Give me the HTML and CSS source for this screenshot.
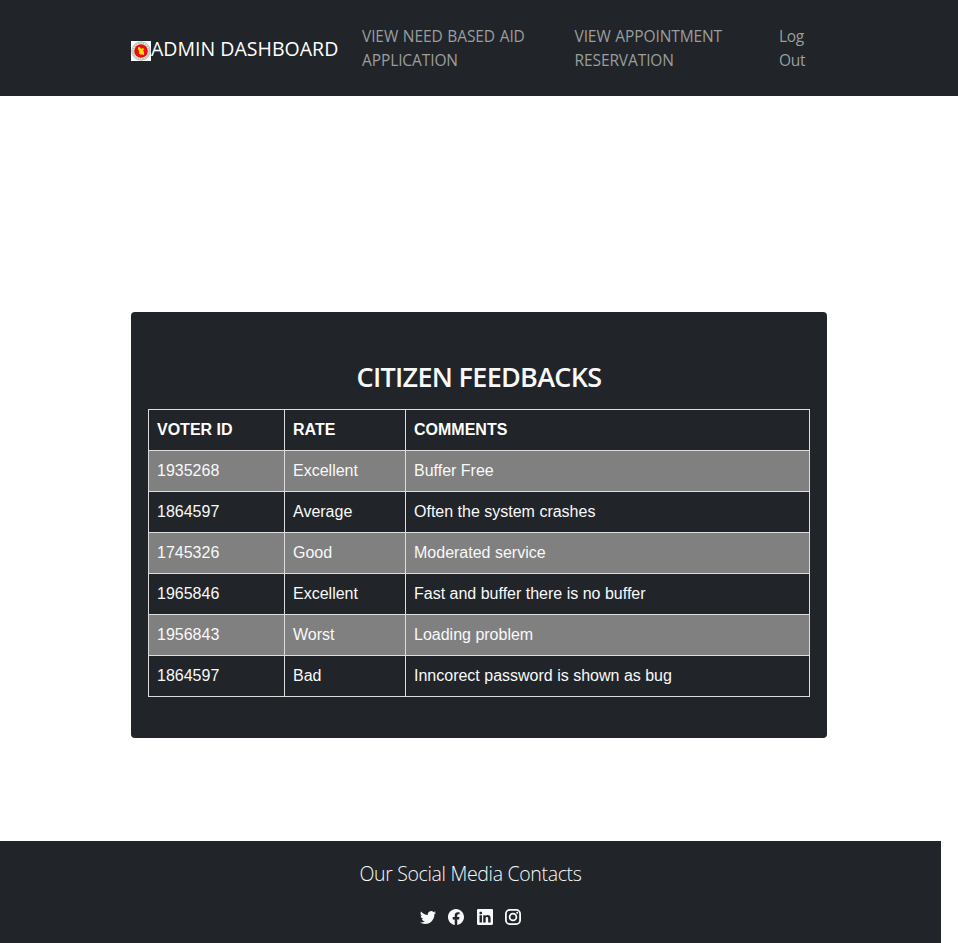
FILE: index.html
```html
<!DOCTYPE html>
<html lang="en">
<head>
<meta charset="utf-8">
<title>Admin Dashboard</title>
<link rel="stylesheet" href="styles.css">
</head>
<body>
<nav class="navbar">
  <a class="brand" href="#">
    <svg class="seal" viewBox="0 0 20 20" aria-hidden="true">
      <rect width="20" height="20" fill="#fff"/>
      <circle cx="10" cy="10" r="9.2" fill="#dcebe0" stroke="#9cc7ab" stroke-width="1"/>
      <circle cx="10" cy="10" r="7.8" fill="none" stroke="#b5a79e" stroke-width="1" stroke-dasharray="1.2 1.2"/>
      <circle cx="10" cy="10" r="6.8" fill="#ed0c10"/>
      <path d="M7 6h2l1 2 2-1 1 1-1 2 1 1v3h-1l-1-1-1 1-1-1H8v-3L7 8z" fill="#ffe000"/>
    </svg><span class="brand-name">ADMIN DASHBOARD</span>
  </a>
  <ul class="links">
    <li class="aid"><a href="#">VIEW NEED BASED AID<br>APPLICATION</a></li>
    <li class="appointment"><a href="#">VIEW APPOINTMENT<br>RESERVATION</a></li>
    <li class="logout"><a href="#">Log<br>Out</a></li>
  </ul>
</nav>
<main class="card">
  <h1 class="title"><span>CITIZEN FEEDBACKS</span></h1>
  <table class="feedback">
    <colgroup><col class="col-id"><col class="col-rate"><col></colgroup>
    <tr><th>VOTER ID</th><th>RATE</th><th>COMMENTS</th></tr>
    <tr><td>1935268</td><td>Excellent</td><td>Buffer Free</td></tr>
    <tr><td>1864597</td><td>Average</td><td>Often the system crashes</td></tr>
    <tr><td>1745326</td><td>Good</td><td>Moderated service</td></tr>
    <tr><td>1965846</td><td>Excellent</td><td>Fast and buffer there is no buffer</td></tr>
    <tr><td>1956843</td><td>Worst</td><td>Loading problem</td></tr>
    <tr><td>1864597</td><td>Bad</td><td>Inncorect password is shown as bug</td></tr>
  </table>
</main>
<footer class="footer">
  <p class="contacts"><span>Our Social Media Contacts</span></p>
  <div class="social">
    <svg viewBox="0 0 16 16"><path d="M5.026 15c6.038 0 9.341-5.003 9.341-9.334 0-.14 0-.282-.006-.422A6.685 6.685 0 0 0 16 3.542a6.658 6.658 0 0 1-1.889.518 3.301 3.301 0 0 0 1.447-1.817 6.533 6.533 0 0 1-2.087.793A3.286 3.286 0 0 0 7.875 6.03a9.325 9.325 0 0 1-6.767-3.429 3.289 3.289 0 0 0 1.018 4.382A3.323 3.323 0 0 1 .64 6.575v.045a3.288 3.288 0 0 0 2.632 3.218 3.203 3.203 0 0 1-.865.115 3.23 3.23 0 0 1-.614-.057 3.283 3.283 0 0 0 3.067 2.277A6.588 6.588 0 0 1 .78 13.58a6.32 6.32 0 0 1-.78-.045A9.344 9.344 0 0 0 5.026 15z"/></svg>
    <svg viewBox="0 0 16 16"><path d="M16 8.049c0-4.446-3.582-8.05-8-8.05C3.58 0-.002 3.603-.002 8.05c0 4.017 2.926 7.347 6.75 7.951v-5.625h-2.03V8.05H6.75V6.275c0-2.017 1.195-3.131 3.022-3.131.876 0 1.791.157 1.791.157v1.98h-1.009c-.993 0-1.303.621-1.303 1.258v1.51h2.218l-.354 2.326H9.25V16c3.824-.604 6.75-3.934 6.75-7.951z"/></svg>
    <svg viewBox="0 0 16 16"><path d="M0 1.146C0 .513.526 0 1.175 0h13.65C15.474 0 16 .513 16 1.146v13.708c0 .633-.526 1.146-1.175 1.146H1.175C.526 16 0 15.487 0 14.854V1.146zm4.943 12.248V6.169H2.542v7.225h2.401zm-1.2-8.212c.837 0 1.358-.554 1.358-1.248-.015-.709-.52-1.248-1.342-1.248-.822 0-1.359.54-1.359 1.248 0 .694.521 1.248 1.327 1.248h.016zm4.908 8.212V9.359c0-.216.016-.432.08-.586.173-.431.568-.878 1.232-.878.869 0 1.216.662 1.216 1.634v3.865h2.401V9.25c0-2.22-1.184-3.252-2.764-3.252-1.274 0-1.845.7-2.165 1.193v.025h-.016a5.54 5.54 0 0 1 .016-.025V6.169h-2.4c.03.678 0 7.225 0 7.225h2.4z"/></svg>
    <svg class="instagram" viewBox="0 0 16 16"><rect x=".9" y=".9" width="14.2" height="14.2" rx="3.9"/><circle cx="8" cy="8" r="3.4"/><circle class="dot" cx="12.2" cy="3.8" r="1"/></svg>
  </div>
</footer>
</body>
</html>
```

FILE: styles.css
```css
* { box-sizing: border-box; }
body {
  margin: 0;
  height: 943px;
  overflow: hidden;
  background: #fff;
  color: #f8f9fa;
  font: 16px/24px "Open Sans", "Noto Sans", sans-serif;
}
a { color: inherit; text-decoration: none; }

.navbar {
  display: flex;
  align-items: center;
  height: 96px;
  padding: 0 131px;
  background: #212529;
  white-space: nowrap;
}
.brand {
  display: flex;
  align-items: center;
  width: 223px;
  color: #fff;
  font-size: 19.5px;
  line-height: 30px;
}
.seal { flex: none; width: 20px; height: 20px; margin-top: 5px; }
.brand-name { padding-top: 2px; letter-spacing: 0.02px; }
.links {
  display: flex;
  margin: 0;
  padding: 0 0 0 8px;
  list-style: none;
  color: #9b9d9e;
  font-size: 15.5px;
}
.links li { letter-spacing: -0.1px; word-spacing: 0.8px; }
.aid { width: 212.5px; }
.appointment { width: 204.5px; }
.links .logout { letter-spacing: -0.3px; }

.card {
  width: 696px;
  height: 426px;
  margin: 216px auto 0;
  padding: 48px 17px 0;
  border-radius: 4px;
  background: #212529;
}
.title {
  margin: 0 0 15px;
  text-align: center;
  font-size: 27px;
  font-weight: 600;
  line-height: 34px;
  letter-spacing: -0.7px;
}
.feedback {
  width: 662px;
  border-collapse: collapse;
  table-layout: fixed;
  font: 16px/24px "Liberation Sans", Arial, sans-serif;
}
.col-id { width: 136px; }
.col-rate { width: 121px; }
.feedback th, .feedback td {
  height: 41px;
  padding: 8px;
  border: 1px solid #ddd;
  text-align: left;
}
.feedback th { color: #fff; }
.feedback tr:nth-child(even) { background: #808080; }

.footer {
  width: 941px;
  height: 102px;
  margin-top: 103px;
  padding-top: 18px;
  background: #212529;
}
.contacts {
  margin: 0 0 19px;
  text-align: center;
  font-size: 19.5px;
  font-weight: 300;
  line-height: 30px;
  letter-spacing: -0.33px;
}
.social { display: flex; justify-content: center; gap: 12.4px; }
.social svg { width: 16px; height: 16px; margin-top: 1px; fill: #f8f9fa; }
.social .instagram { fill: none; stroke: #f8f9fa; stroke-width: 1.8; }
.social .instagram .dot { fill: #f8f9fa; stroke: none; }
```
